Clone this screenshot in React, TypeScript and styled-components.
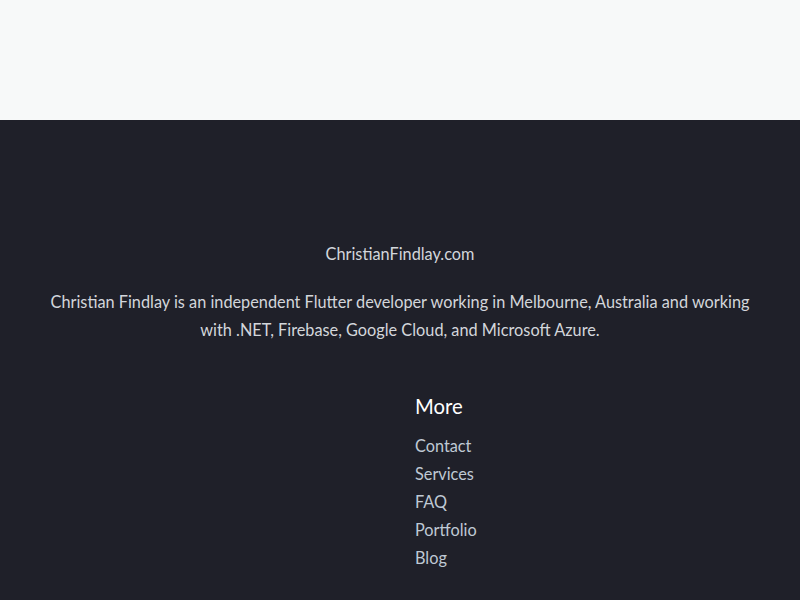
import React from "react";
import styled, { createGlobalStyle } from "styled-components";

const GlobalStyle = createGlobalStyle`
  html, body { margin: 0; padding: 0; }
  body {
    background: #1f2029;
    font-family: "Lato", "Noto Sans", sans-serif;
    -webkit-font-smoothing: antialiased;
  }
`;

const TopArea = styled.div`
  height: 120px;
  background: #f7f9f9;
`;

const Footer = styled.footer`
  background: #1f2029;
  padding: 122px 0 28px;
  min-height: 480px;
  box-sizing: border-box;
`;

const Container = styled.div`
  max-width: 720px;
  margin: 0 auto;
`;

const Brand = styled.div`
  text-align: center;
  color: #d3d6db;
  font-size: 16.3px;
  line-height: 24px;
`;

const Description = styled.p`
  margin: 22px 0 0;
  text-align: center;
  color: #d3d6db;
  font-size: 16.3px;
  line-height: 28px;
`;

const Columns = styled.div`
  display: grid;
  grid-template-columns: 1fr 1fr;
  margin-top: 50px;
`;

const Column = styled.div`
  padding: 0 15px;
`;

const Heading = styled.h5`
  margin: 0 0 14px;
  color: #ffffff;
  font-size: 20.3px;
  font-weight: 400;
  line-height: 24px;
`;

const LinkList = styled.ul`
  list-style: none;
  margin: 0;
  padding: 0;
  display: flex;
  flex-direction: column;
`;

const LinkItem = styled.li`
  font-size: 16.3px;
  line-height: 28px;
`;

const FooterLink = styled.a`
  color: #bfc9d4;
  text-decoration: none;
`;

const links = ["Contact", "Services", "FAQ", "Portfolio", "Blog"];

export default function App() {
  return (
    <>
      <GlobalStyle />
      <TopArea />
      <Footer>
        <Container>
          <Brand>ChristianFindlay.com</Brand>
          <Description>
            Christian Findlay is an independent Flutter developer working in Melbourne, Australia and working
            with .NET, Firebase, Google Cloud, and Microsoft Azure.
          </Description>
          <Columns>
            <Column />
            <Column>
              <Heading>More</Heading>
              <LinkList>
                {links.map((l) => (
                  <LinkItem key={l}>
                    <FooterLink href="#">{l}</FooterLink>
                  </LinkItem>
                ))}
              </LinkList>
            </Column>
          </Columns>
        </Container>
      </Footer>
    </>
  );
}
